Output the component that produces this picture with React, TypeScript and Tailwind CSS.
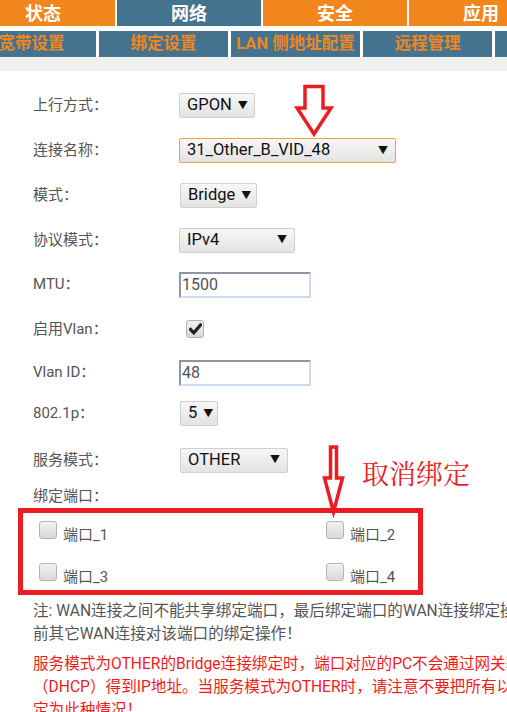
import React from "react";

const ORANGE = "bg-[#f0861c]";

function Sel({ w, text, focus }: { w: string; text: string; focus?: boolean }) {
  return (
    <div
      className={`${w} h-[25px] flex items-center justify-between gap-[6px] pl-[7px] pr-[7px] rounded-[2px] border ${
        focus ? "border-[#eaa440]" : "border-[#cfcfcf]"
      } bg-gradient-to-b from-[#f7f7f7] to-[#e3e3e3] text-[16.5px] text-[#111]`}
    >
      <span>{text}</span>
      <span className="text-[10px] leading-none text-[#111]">▼</span>
    </div>
  );
}

function Inp({ text }: { text: string }) {
  return (
    <div className="w-[132px] h-[26px] flex items-center pl-[1px] border-2 border-t-[#8a96a6] border-l-[#8a96a6] border-r-[#cddcf0] border-b-[#cddcf0] bg-white text-[16px] text-[#555]">
      {text}
    </div>
  );
}

function Box({ checked }: { checked?: boolean }) {
  return (
    <div className="w-[18px] h-[18px] shrink-0 rounded-[3px] border border-[#b4b4b4] bg-gradient-to-b from-[#f2f2f2] to-[#d9d9d9] flex items-center justify-center">
      {checked && (
        <svg width="13" height="12" viewBox="0 0 13 12">
          <path d="M1.5 6.5 L4.8 9.8 L11.5 2" fill="none" stroke="#222" strokeWidth="3.2" strokeLinecap="square" />
        </svg>
      )}
    </div>
  );
}

function Row({ h, label, children }: { h: string; label: string; children?: React.ReactNode }) {
  return (
    <div className={`${h} flex items-center`}>
      <div className="w-[179px] pl-[33px] shrink-0 text-[15px] text-[#555] whitespace-nowrap">{label}</div>
      <div className="flex items-center">{children}</div>
    </div>
  );
}

function Port({ label }: { label: string }) {
  return (
    <div className="flex items-start gap-[6px]">
      <Box />
      <span className="mt-[4px] text-[15px] leading-[20px] text-[#555]">{label}</span>
    </div>
  );
}

export default function App() {
  return (
    <div className="relative w-[507px] h-[712px] overflow-hidden bg-white font-['Roboto','Noto_Sans_CJK_SC',sans-serif]">
      {/* top nav */}
      <div className="flex gap-[2px] ml-[-29px] h-[26px]">
        <div className={`w-[144px] shrink-0 ${ORANGE} flex items-center justify-center text-white font-bold text-[18px]`}>状态</div>
        <div className="w-[144px] shrink-0 bg-[#44738f] flex items-center justify-center text-white font-bold text-[18px]">网络</div>
        <div className={`w-[144px] shrink-0 ${ORANGE} flex items-center justify-center text-white font-bold text-[18px]`}>安全</div>
        <div className={`w-[144px] shrink-0 ${ORANGE} flex items-center justify-center text-white font-bold text-[18px]`}>应用</div>
      </div>
      <div className="flex gap-[3px] ml-[-33px] h-[26px] mt-[5px]">
        {["宽带设置", "绑定设置", "LAN 侧地址配置", "远程管理", ""].map((t, i) => (
          <div
            key={i}
            className="w-[129px] shrink-0 bg-[#44738f] flex items-center justify-center text-[#f0861c] font-bold text-[16.5px] whitespace-nowrap"
          >
            {t}
          </div>
        ))}
      </div>
      <div className="h-[14px] bg-[#eef0ee]" />

      {/* form */}
      <div className="mt-[12px]">
        <Row h="h-[45px]" label="上行方式：">
          <Sel w="w-[76px]" text="GPON" />
        </Row>
        <Row h="h-[45px]" label="连接名称：">
          <Sel w="w-[217px]" text="31_Other_B_VID_48" focus />
        </Row>
        <Row h="h-[45px]" label="模式：">
          <div className="ml-[1px]">
            <Sel w="w-[77px]" text="Bridge" />
          </div>
        </Row>
        <Row h="h-[44px]" label="协议模式：">
          <Sel w="w-[116px]" text="IPv4" />
        </Row>
        <Row h="h-[45px]" label="MTU：">
          <Inp text="1500" />
        </Row>
        <Row h="h-[44px]" label="启用Vlan：">
          <div className="ml-[7px]">
            <Box checked />
          </div>
        </Row>
        <Row h="h-[43px]" label="Vlan ID：">
          <Inp text="48" />
        </Row>
        <Row h="h-[39px]" label="802.1p：">
          <div className="ml-[1px]">
            <Sel w="w-[38px]" text="5" />
          </div>
        </Row>
        <Row h="h-[54px]" label="服务模式：">
          <div className="ml-[1px]">
            <Sel w="w-[108px]" text="OTHER" />
          </div>
        </Row>
        <Row h="h-[18px]" label="绑定端口：" />
      </div>

      {/* port box */}
      <div className="ml-[18px] mt-[3px] w-[405px] h-[87px] border-[5px] border-[#ec1c24] pl-[16px] pt-[8px]">
        <div className="grid grid-cols-[287px_1fr] gap-y-[18px]">
          <Port label="端口_1" />
          <Port label="端口_2" />
          <Port label="端口_3" />
          <Port label="端口_4" />
        </div>
      </div>

      {/* notes */}
      <div className="pl-[33px] mt-[5px] text-[15.6px] leading-[23px] text-[#555] whitespace-nowrap">
        <div>注: WAN连接之间不能共享绑定端口，最后绑定端口的WAN连接绑定操作将解除此</div>
        <div>前其它WAN连接对该端口的绑定操作！</div>
      </div>
      <div className="pl-[33px] mt-[7px] text-[15.6px] leading-[23px] text-[#f21b1b] whitespace-nowrap">
        <div>服务模式为OTHER的Bridge连接绑定时，端口对应的PC不会通过网关获取</div>
        <div>（DHCP）得到IP地址。当服务模式为OTHER时，请注意不要把所有以太网口绑</div>
        <div>定为此种情况！</div>
      </div>

      {/* annotations */}
      <svg className="absolute left-[294px] top-[82px]" width="42" height="60" viewBox="0 0 42 60">
        <polygon
          points="11,4.5 29,4.5 29,26 37,26 20,52 3,26 11,26"
          fill="none"
          stroke="#ec1c24"
          strokeWidth="3.5"
          strokeLinejoin="miter"
        />
      </svg>
      <svg className="absolute left-[320px] top-[442px]" width="28" height="76" viewBox="0 0 28 76">
        <polygon
          points="10.5,5 16.5,5 16.5,36 22.5,36 13.5,70 4.5,36 10.5,36"
          fill="none"
          stroke="#ec1c24"
          strokeWidth="3.5"
          strokeLinejoin="miter"
        />
      </svg>
      <div className="absolute left-[362px] top-[458px] text-[27px] leading-[30px] text-[#ec1c24] font-['Noto_Serif_CJK_SC','Noto_Sans_CJK_SC',serif]">
        取消绑定
      </div>
    </div>
  );
}
